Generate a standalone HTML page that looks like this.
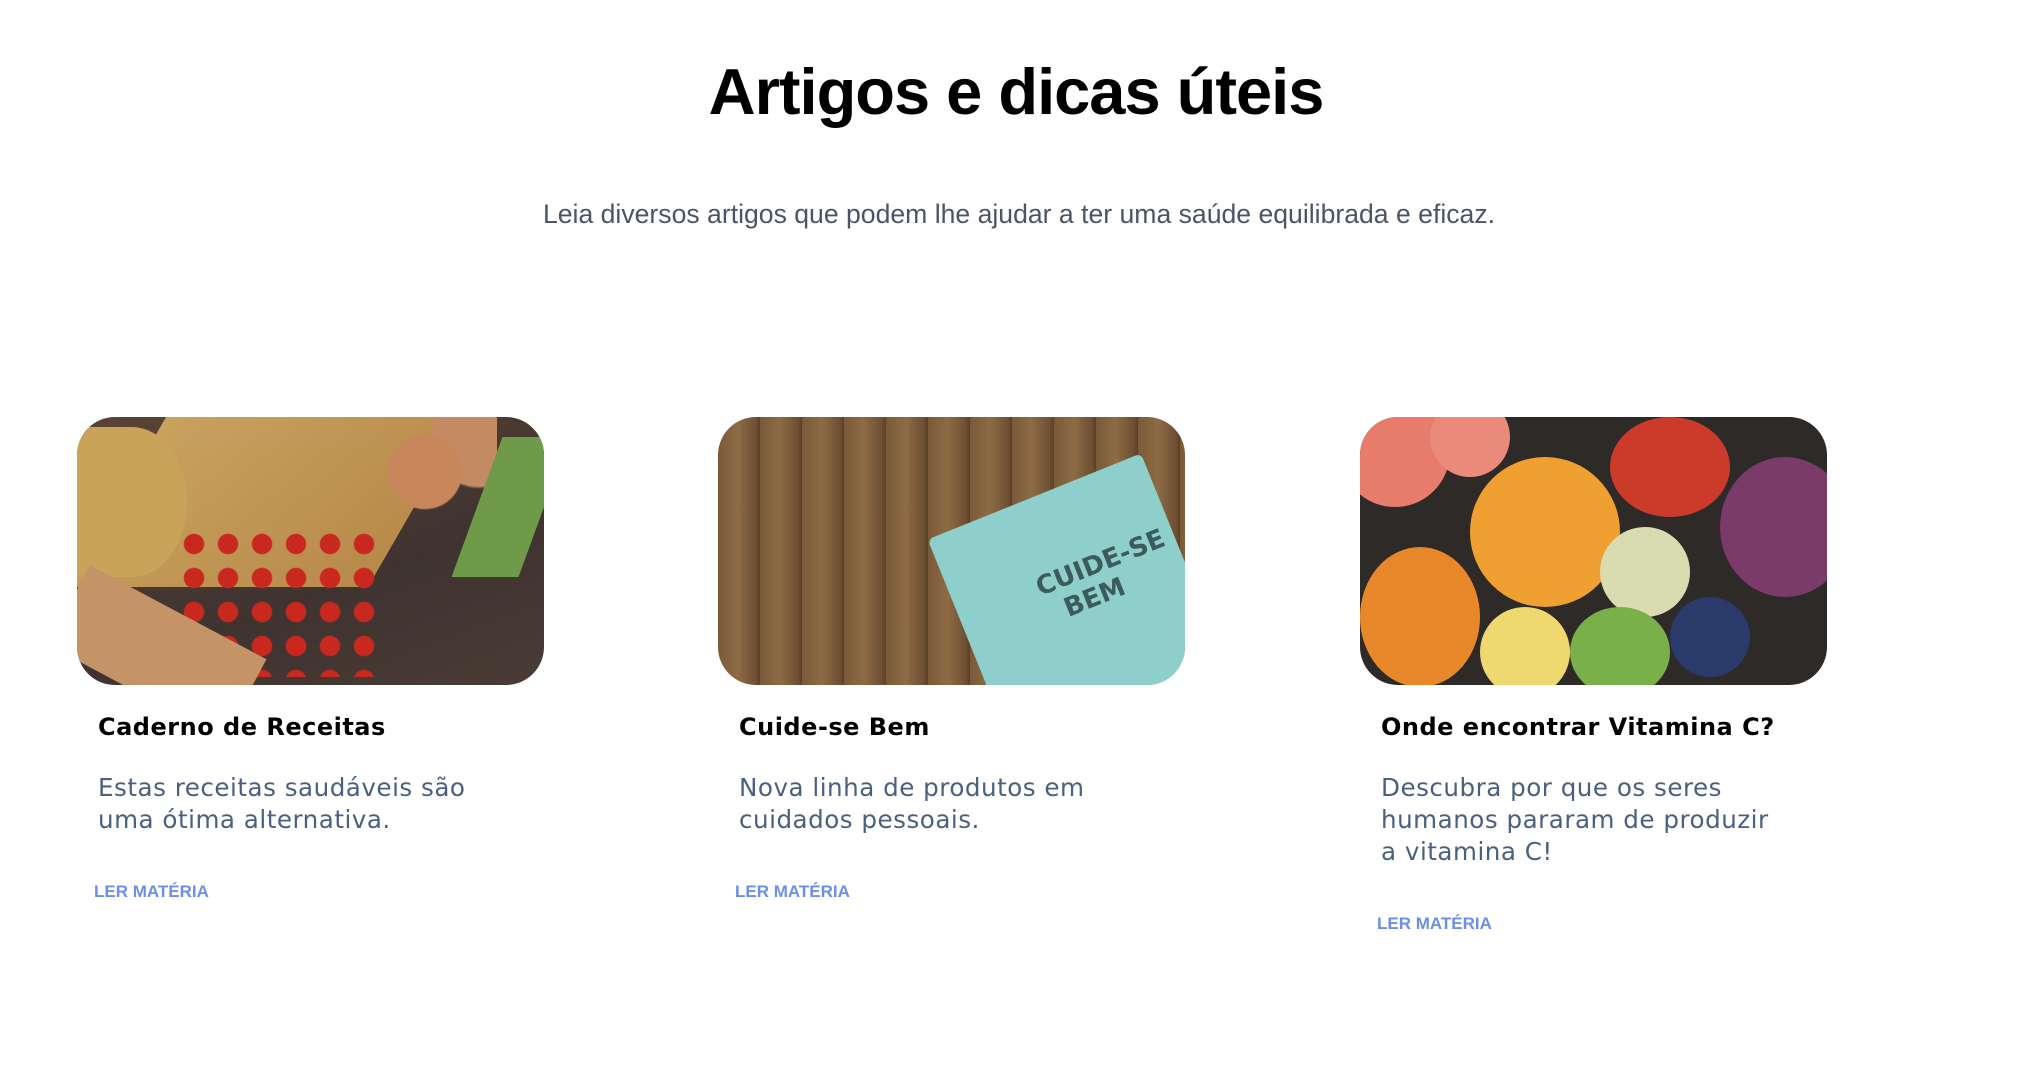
<!DOCTYPE html>
<html><head><meta charset="utf-8"><style>
*{margin:0;padding:0;box-sizing:border-box}
body{width:2038px;height:1084px;background:#fff;position:relative;overflow:hidden;font-family:"DejaVu Sans",sans-serif}
h1{position:absolute;top:54px;left:0;width:2032px;text-align:center;font:bold 65px "Liberation Sans",sans-serif;color:#000;letter-spacing:-1px}
.sub{position:absolute;top:199px;left:0;width:2038px;text-align:center;font:26.6px "Liberation Sans",sans-serif;color:#4a5568}
.card{position:absolute;top:417px;width:470px}
.img{width:467px;height:268px;border-radius:38px;overflow:hidden;position:relative}
.t{margin:28px 0 0 21px;font-weight:bold;font-size:24px;color:#000;letter-spacing:.5px}
.d{margin:31px 0 0 21px;font-size:24.6px;line-height:32px;color:#4a6080;letter-spacing:.5px}
.l{margin:46px 0 0 17px;font:bold 17px "Liberation Sans",sans-serif;color:#6b8fe3}
</style></head><body>
<h1>Artigos e dicas úteis</h1>
<div class="sub">Leia diversos artigos que podem lhe ajudar a ter uma saúde equilibrada e eficaz.</div>

<div class="card" style="left:77px">
<div class="img" style="background:linear-gradient(160deg,#5a4436,#3f3330 60%,#4a3b34)">
<div style="position:absolute;left:40px;top:0;width:300px;height:170px;background:linear-gradient(120deg,#c9a25e,#b8894a);transform:skewX(-30deg)"></div>
<div style="position:absolute;left:0;top:10px;width:110px;height:150px;background:#caa35a;border-radius:0 50% 50% 0"></div>
<div style="position:absolute;left:300px;top:0;width:120px;height:110px;background:radial-gradient(circle at 40% 50%,#c7875a 40%,transparent 42%),radial-gradient(circle at 85% 20%,#c48a64 35%,transparent 37%)"></div>
<div style="position:absolute;left:400px;top:20px;width:67px;height:140px;background:#6e9a4a;transform:skewX(-20deg)"></div>
<div style="position:absolute;left:100px;top:110px;width:200px;height:150px;background:radial-gradient(circle,#c8281e 40%,transparent 45%) 0 0/34px 34px"></div>
<div style="position:absolute;left:-20px;top:190px;width:200px;height:90px;background:#c49368;transform:rotate(28deg)"></div>
</div>
<div class="t">Caderno de Receitas</div>
<div class="d">Estas receitas saudáveis são<br>uma ótima alternativa.</div>
<div class="l">LER MATÉRIA</div>
</div>

<div class="card" style="left:718px">
<div class="img" style="background:repeating-linear-gradient(90deg,#7a5a38 0,#8e6b45 20px,#6d4f32 38px,#5a3f27 42px)">
<div style="position:absolute;left:250px;top:70px;width:230px;height:260px;background:#8fcfcb;transform:rotate(-22deg);border-radius:6px"></div>
<div style="position:absolute;left:320px;top:130px;font:bold 26px 'DejaVu Sans',sans-serif;color:#3d5b5d;transform:rotate(-22deg)">CUIDE-SE<br>&nbsp;&nbsp;BEM</div>
</div>
<div class="t">Cuide-se Bem</div>
<div class="d">Nova linha de produtos em<br>cuidados pessoais.</div>
<div class="l">LER MATÉRIA</div>
</div>

<div class="card" style="left:1360px">
<div class="img" style="background:#2e2a28">
<div style="position:absolute;left:-20px;top:-20px;width:110px;height:110px;border-radius:50%;background:#e87c6c"></div>
<div style="position:absolute;left:70px;top:-20px;width:80px;height:80px;border-radius:50%;background:#e98a7a"></div>
<div style="position:absolute;left:110px;top:40px;width:150px;height:150px;border-radius:50%;background:#f0a030"></div>
<div style="position:absolute;left:250px;top:0;width:120px;height:100px;border-radius:50%;background:#cc3a2a"></div>
<div style="position:absolute;left:360px;top:40px;width:130px;height:140px;border-radius:50%;background:#7a3a6a"></div>
<div style="position:absolute;left:0;top:130px;width:120px;height:140px;border-radius:50%;background:#e8882a"></div>
<div style="position:absolute;left:240px;top:110px;width:90px;height:90px;border-radius:50%;background:#d8dcb0"></div>
<div style="position:absolute;left:210px;top:190px;width:100px;height:90px;border-radius:50%;background:#7ab04a"></div>
<div style="position:absolute;left:120px;top:190px;width:90px;height:90px;border-radius:50%;background:#f0d870"></div>
<div style="position:absolute;left:310px;top:180px;width:80px;height:80px;border-radius:50%;background:#2a3a6a"></div>
</div>
<div class="t">Onde encontrar Vitamina C?</div>
<div class="d">Descubra por que os seres<br>humanos pararam de produzir<br>a vitamina C!</div>
<div class="l">LER MATÉRIA</div>
</div>
</body></html>
